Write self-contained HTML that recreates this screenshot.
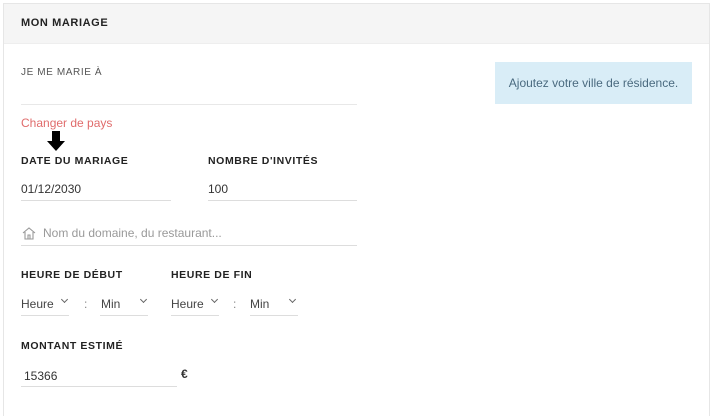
<!DOCTYPE html>
<html><head><meta charset="utf-8"><style>
html,body{margin:0;width:720px;height:416px;overflow:hidden}
body{background:#fff;font-family:"Liberation Sans",sans-serif;position:relative}
.card{position:absolute;left:3px;top:3px;width:707px;height:413px;border:1px solid #e6e6e6;border-bottom:none;background:#fff;box-sizing:border-box}
.hd{position:absolute;left:0;top:0;right:0;height:39px;background:#f5f5f5;border-bottom:1px solid #eee}
.a{position:absolute;white-space:nowrap}
.lbl{font-size:10.5px;font-weight:bold;color:#222;letter-spacing:.6px}
.v{font-size:12px;color:#333}
.ln{position:absolute;height:1px;background:#ddd}
.sel{font-size:12px;color:#444}
.chev{position:absolute;width:4px;height:4px;border-right:1px solid #666;border-bottom:1px solid #666;transform:rotate(45deg)}
</style></head><body>
<div class="card"><div class="hd"></div></div>
<div class="a lbl" style="left:21px;top:17px;font-size:11px">MON MARIAGE</div>
<div class="a lbl" style="left:21px;top:67px;font-weight:normal;color:#555;font-size:10px">JE ME MARIE À</div>
<div class="ln" style="left:21px;top:104px;width:336px;background:#e8e8e8"></div>
<div class="a" style="left:21px;top:116px;font-size:12px;color:#e06c6c">Changer de pays</div>
<svg class="a" style="left:45px;top:130px" width="22" height="22" viewBox="0 0 22 22"><path d="M7 1h8v10h5L11 21 2 11h5z" fill="#000"/></svg>
<div class="a lbl" style="left:21px;top:155px">DATE DU MARIAGE</div>
<div class="a lbl" style="left:208px;top:155px">NOMBRE D'INVITÉS</div>
<div class="a v" style="left:21px;top:182px">01/12/2030</div>
<div class="a v" style="left:208px;top:182px">100</div>
<div class="ln" style="left:21px;top:200px;width:150px"></div>
<div class="ln" style="left:208px;top:200px;width:149px"></div>
<svg class="a" style="left:22px;top:227px" width="14" height="13" viewBox="0 0 14 13"><path d="M1 6L7 1l6 5M3 5v7h8V5M6 12V8h2v4" fill="none" stroke="#999" stroke-width="1.1"/></svg>
<div class="a" style="left:43px;top:226px;font-size:12px;color:#999">Nom du domaine, du restaurant...</div>
<div class="ln" style="left:21px;top:245px;width:336px"></div>
<div class="a lbl" style="left:21px;top:269px">HEURE DE DÉBUT</div>
<div class="a lbl" style="left:171px;top:269px">HEURE DE FIN</div>
<div class="a sel" style="left:21px;top:297px">Heure</div><div class="chev" style="left:62px;top:297px"></div>
<div class="a sel" style="left:84px;top:297px;color:#888">:</div>
<div class="a sel" style="left:101px;top:297px">Min</div><div class="chev" style="left:141px;top:297px"></div>
<div class="a sel" style="left:171px;top:297px">Heure</div><div class="chev" style="left:212px;top:297px"></div>
<div class="a sel" style="left:233px;top:297px;color:#888">:</div>
<div class="a sel" style="left:250px;top:297px">Min</div><div class="chev" style="left:290px;top:297px"></div>
<div class="ln" style="left:21px;top:315px;width:48px"></div>
<div class="ln" style="left:100px;top:315px;width:48px"></div>
<div class="ln" style="left:171px;top:315px;width:48px"></div>
<div class="ln" style="left:250px;top:315px;width:48px"></div>
<div class="a lbl" style="left:21px;top:340px">MONTANT ESTIMÉ</div>
<div class="a v" style="left:24px;top:369px">15366</div>
<div class="a v" style="left:181px;top:367px;font-weight:bold">€</div>
<div class="ln" style="left:21px;top:386px;width:156px"></div>
<div class="a" style="left:495px;top:62px;width:197px;height:42px;background:#d9edf7;color:#4a6a7f;font-size:12px;line-height:42px;text-align:center">Ajoutez votre ville de résidence.</div>
</body></html>
